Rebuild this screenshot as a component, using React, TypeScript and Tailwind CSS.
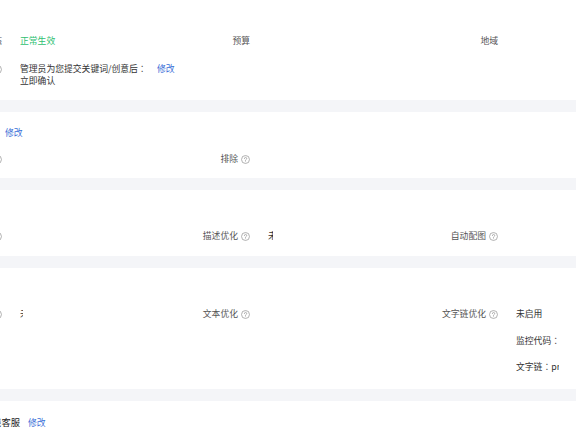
import React from 'react';

function Help() {
  return (
    <svg width="9" height="9" viewBox="0 0 10 10" className="shrink-0">
      <circle cx="5" cy="5" r="4.4" fill="none" stroke="#9a9a9a" strokeWidth="0.85" />
      <path d="M3.75 3.95a1.3 1.3 0 1 1 1.85 1.15c-.4.2-.6.45-.6.85v.3" fill="none" stroke="#9a9a9a" strokeWidth="0.85" strokeLinecap="round" />
      <circle cx="5" cy="7.45" r="0.5" fill="#9a9a9a" />
    </svg>
  );
}

// full-width colon, centred like the reference
const Colon = () => <span className="font-['Noto_Sans_CJK_TC',sans-serif]">：</span>;

function Field({ label, help, children }: { label?: string; help?: boolean; children?: React.ReactNode }) {
  return (
    <div className="flex w-[248px] shrink-0 items-start">
      <div className="w-[100px] shrink-0 h-[16px] flex justify-end items-center gap-[3px] text-[#555] whitespace-nowrap">
        {label && <span>{label}</span>}
        {help && <Help />}
      </div>
      <div className="ml-[18px] min-w-0 text-[#333]">{children}</div>
    </div>
  );
}

function Header({ title, width, edit }: { title: string; width: string; edit?: boolean }) {
  return (
    <div className="flex items-center h-[16px] gap-2 whitespace-nowrap">
      <span className={`${width} shrink-0 text-right text-[9.3px] text-[#222]`}>{title}</span>
      {edit && <span className="text-[#3a6fd8] cursor-pointer">修改</span>}
    </div>
  );
}

const Band = () => <div className="h-[12px] bg-[#f4f5f8] ml-[-40px] w-[900px]" />;

export default function App() {
  return (
    <div className="w-[576px] h-[432px] overflow-hidden bg-white font-['Noto_Sans_CJK_SC',sans-serif] text-[8.8px]">
      <div className="ml-[-98px] w-[760px]">
        {/* 基本设置 */}
        <section className="h-[100px] pt-[8px]">
          <Header title="推广设置" width="w-[60px]" />
          <div className="flex mt-[9px] leading-[16px]">
            <Field label="状态">
              <span className="text-[#2fbf71]">正常生效</span>
            </Field>
            <Field label="预算" />
            <Field label="地域" />
          </div>
          <div className="flex mt-[12px]">
            <Field label="审核方式" help>
              <div className="flex items-start leading-[12px] mt-[2px] whitespace-nowrap">
                <div className="w-[128px] shrink-0">
                  管理员为您提交关键词/创意后<Colon />
                  <br />
                  立即确认
                </div>
                <span className="ml-[9px] text-[#3a6fd8]">修改</span>
              </div>
            </Field>
          </div>
        </section>
        <Band />

        {/* 否定设置 */}
        <section className="h-[66px] pt-[13px]">
          <Header title="否定关键词设置" width="w-[95px]" edit />
          <div className="flex mt-[10px] leading-[16px]">
            <Field label="否定关键词" help />
            <Field label="排除" help />
          </div>
        </section>
        <Band />

        {/* 创意优化 */}
        <section className="h-[66px] pt-[13px]">
          <Header title="创意优化" width="w-[80px]" />
          <div className="flex mt-[9px] leading-[16px]">
            <Field label="标题优化" help />
            <Field label="描述优化" help>
              <div className="w-[4.5px] overflow-hidden whitespace-nowrap">未启用</div>
            </Field>
            <Field label="自动配图" help />
          </div>
        </section>
        <Band />

        {/* 文本优化 */}
        <section className="h-[121px] pt-[13px]">
          <Header title="高级样式" width="w-[80px]" />
          <div className="flex mt-[9px] leading-[16px]">
            <Field label="图文优化" help>
              <div className="w-[2.5px] overflow-hidden whitespace-nowrap">未启用</div>
            </Field>
            <Field label="文本优化" help />
            <Field label="文字链优化" help>
              <div className="w-[43px] overflow-hidden whitespace-nowrap flex flex-col gap-[10.5px]">
                <span>未启用</span>
                <span>监控代码<Colon /></span>
                <span>文字链<Colon />pr</span>
              </div>
            </Field>
          </div>
        </section>
        <Band />

        {/* 客服 */}
        <section className="pt-[14px]">
          <Header title="在线客服" width="w-[118px]" edit />
        </section>
      </div>
    </div>
  );
}
